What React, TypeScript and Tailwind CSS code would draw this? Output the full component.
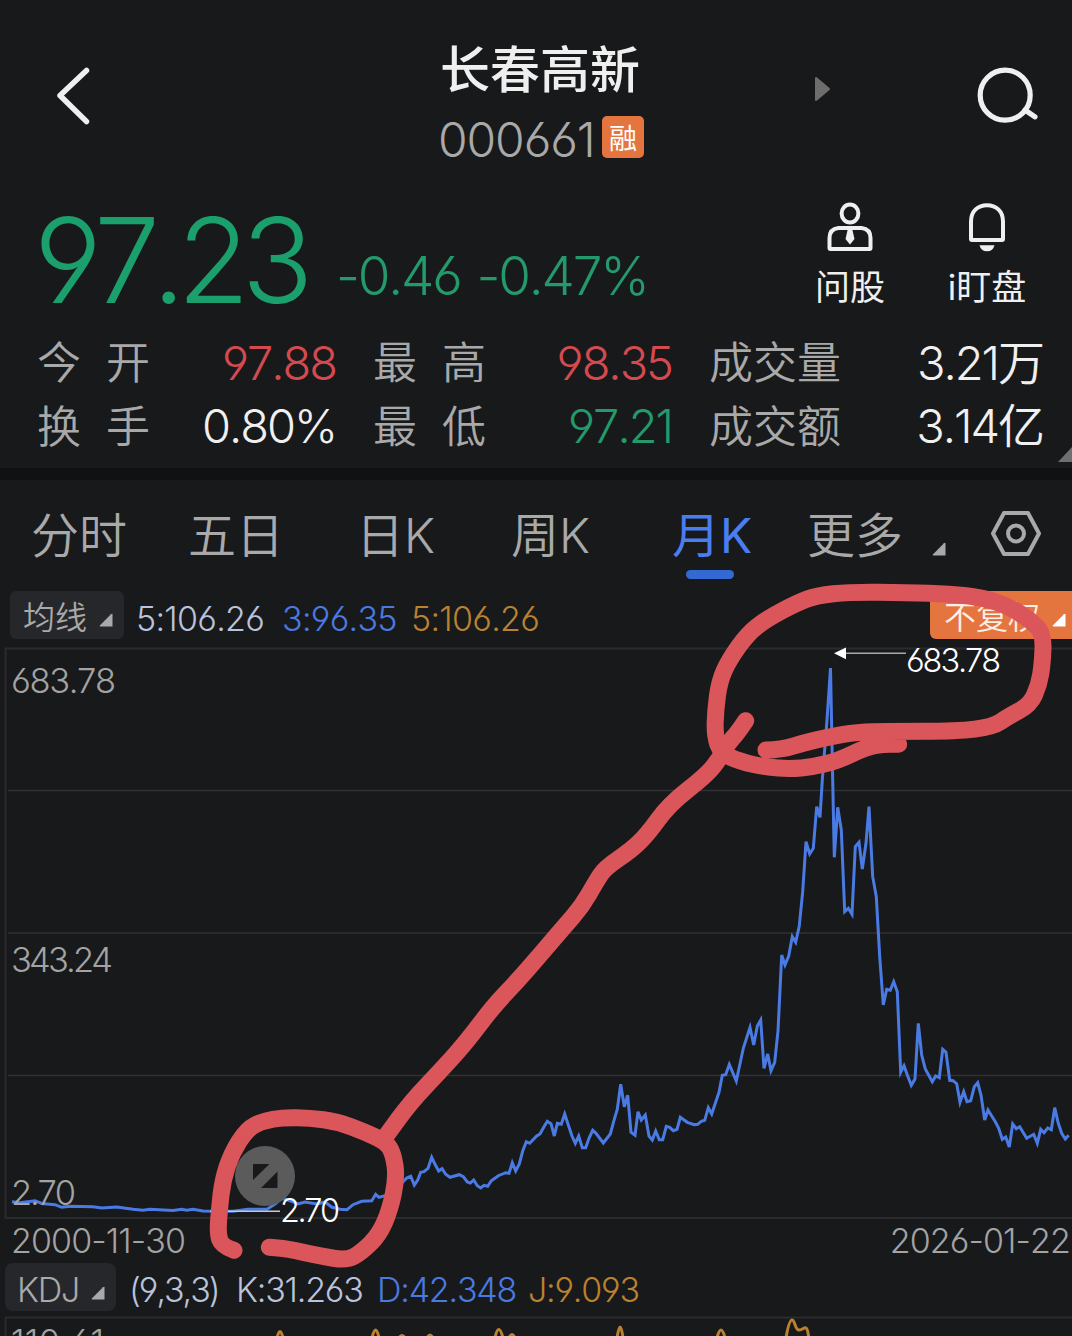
type Point = [number, number]

const quotes = [
  [
    { label: ['今', '开'], value: '97.88', color: 'text-[#d44a4f]' },
    { label: ['最', '高'], value: '98.35', color: 'text-[#d44a4f]' },
    { label: ['成', '交', '量'], value: '3.21万', color: 'text-[#f0f0f0]' },
  ],
  [
    { label: ['换', '手'], value: '0.80%', color: 'text-[#f0f0f0]' },
    { label: ['最', '低'], value: '97.21', color: 'text-[#23996c]' },
    { label: ['成', '交', '额'], value: '3.14亿', color: 'text-[#f0f0f0]' },
  ],
]

const tabs = [
  { name: '分时', width: 'w-[157px]' },
  { name: '五日', width: 'w-[168px]' },
  { name: '日K', width: 'w-[155px]' },
  { name: '周K', width: 'w-[161px]' },
  { name: '月K', width: 'w-[135px]', active: true },
  { name: '更多', width: 'w-[125px]' },
]

const gridLines = [790.5, 933, 1075.5]

// Monthly close, already projected to screen units
const priceLine =
  '12,1201.7 20,1202.7 35,1200.7 41.7,1203.5 55,1204.7 61.7,1207.3 70,1206.3 93,1206.7 101.7,1208 116.7,1207 133,1209.3 143,1210.3 150,1209.3 173,1210.5 181.7,1209.3 186.7,1210.3 193,1209.3 203,1211 213,1211.3 233,1211.3 248,1209.3 267,1209.3 275,1204 281.7,1198.3 290,1200.7 298,1204 305,1202 317,1204 325,1202 332,1207.3 340,1209.3 347,1209.7 353,1204.7 361.7,1201.3 371.7,1200.7 375.7,1194.3 379,1197.3 388,1195 400,1185 ' +
  '406.7,1178 410.7,1176.3 414.3,1185 417.7,1180 420.7,1172.3 424,1171.7 428,1168.3 431.7,1157.3 435,1164.3 438.7,1171 442,1168.7 445.7,1174.3 450,1177.3 459.3,1174.7 463.3,1176.7 467.3,1182 470.3,1183 473.7,1180 477.3,1185.7 480.7,1188 484,1185.3 487.7,1186.3 491.3,1180.7 498.3,1175.7 505.7,1172.7 509,1173.3 512.3,1162.7 515.7,1171 519.3,1164 522.7,1151 526.3,1141.7 529.7,1143.3 536.7,1136 540,1134 543.7,1127.3 547.3,1121.3 551,1123.7 554.3,1136 557.3,1123.3 561.3,1124.3 564.7,1114 568.3,1125 572,1136 575.3,1143.3 578.7,1136 582.3,1147.7 585.7,1147.7 589,1138.3 592.7,1130.3 596,1133.3 603.3,1143 610.3,1134 613.7,1121.3 617.3,1109.3 620.7,1084.3 624.3,1106.7 627.7,1095.3 631,1132.3 635,1135.3 638,1111.7 641.3,1120 645.3,1115 649,1136 652.3,1140 655.7,1131 659.3,1139.7 662.7,1139.7 666.3,1126.3 669.7,1127.3 673.3,1130.7 677,1129.3 680.3,1117.3 687.3,1122.3 694.3,1124.7 697.7,1124.3 701.3,1121.3 704.7,1120.3 708.3,1107.7 711.7,1114 719,1092.3 722.3,1075.3 725.7,1074.7 ' +
  '729.3,1064.5 736.3,1081 743.3,1048.3 750,1027.3 753.7,1045 757.3,1026 760.7,1020 764,1068.3 767.7,1054 771,1070.7 774.7,1062.3 778,1031 781.7,955 785,965 788.7,956 792.3,936.7 795.7,942.3 799.3,925.7 802.7,891.7 806,841.7 809.7,854 813.3,848.3 816.7,806.7 820,817.3 822.3,780 827,720 830.5,668 832.7,780 834.3,857.3 837.7,807.3 841.3,830 844.7,911.7 848.3,908.3 852,914.3 855.3,846.7 859,842.3 862.3,869 866,843.3 869,806.7 872.7,876.7 876.3,896.7 879.7,956.7 883.3,1005 886.7,989.3 890.3,990.3 893.7,981.7 897.3,991.7 900.7,1072.3 904,1065.7 907.7,1076 911.3,1085.3 915,1079 918.3,1023.3 921.7,1055 925.3,1069 932.3,1081.7 935.7,1076 939.3,1077.7 942.7,1049.3 946,1052.3 949.7,1080.3 953,1080.7 956.7,1083.7 960,1102.3 963.7,1091.7 967,1101.7 970.7,1100.7 974.3,1086.7 977.7,1082.7 981,1095 984.7,1120 988,1110 995.3,1121.7 998.7,1128.3 1002.3,1139.3 1005.7,1137 1009.3,1147 1012.7,1124 1016.3,1128.7 1019.7,1126.7 1026.7,1138.3 1033.7,1134.3 1037.3,1143.3 1040.7,1129.3 1044,1132.7 1047.7,1128 1051.3,1129.7 1054.7,1107.7 1058.3,1123.3 1061.7,1133.3 1065.3,1139 1068.7,1135.3'

const strokes: Point[][] = [
  [
    [766, 750], [781.7, 749.7], [803, 743], [830, 736.7], [856.7, 732], [890, 731.3], [956.7, 731.3],
    [993, 727], [1008, 716.7], [1030, 705], [1039, 685], [1042.5, 663], [1043.5, 633], [1030, 620],
    [1010, 607], [983, 597.5], [950, 594], [906.7, 592.5], [850, 592], [816.7, 595.5], [796.7, 603],
    [766.7, 619], [748, 633.3], [729, 660], [719.5, 681], [715.5, 710], [714.8, 736], [721, 753],
    [740, 761.7], [766.7, 767.3], [790, 768.9], [813, 767], [838, 760.7], [866.7, 747], [883, 744.3],
    [898.7, 744.3],
  ],
  [
    [745.7, 720.7], [736.7, 734], [728, 743], [720, 758], [706.7, 775], [669, 804.5], [647, 835],
    [630, 851], [605, 868], [596, 881.7], [581.7, 906.7], [563, 928], [540, 955], [516.7, 981.7],
    [493, 1006.7], [466.7, 1041.7], [443, 1068], [410, 1103], [386.7, 1135],
  ],
  [
    [234, 1250.3], [222, 1246], [217.7, 1234], [219.3, 1210], [222.7, 1180], [231.7, 1153], [247, 1129],
    [263, 1121], [283, 1117.5], [310, 1118], [337, 1121.5], [365, 1132], [386, 1142], [393, 1153],
    [396.8, 1176.7], [390, 1210], [379, 1235], [361.7, 1252], [347, 1260.5], [320, 1256],
    [286.7, 1248.7], [269.3, 1247.3],
  ],
]

// Quadratic curves between midpoints keep the marker strokes soft
function smooth(points: Point[]) {
  const last = points[points.length - 1]
  let d = `M${points[0][0]} ${points[0][1]}`
  for (let i = 1; i < points.length - 1; i++) {
    const [x, y] = points[i]
    const [nx, ny] = points[i + 1]
    d += `Q${x} ${y} ${(x + nx) / 2} ${(y + ny) / 2}`
  }
  return `${d}L${last[0]} ${last[1]}`
}

function Corner({ className }: { className?: string }) {
  return (
    <svg viewBox="0 0 14 14" className={`h-[14px] w-[14px] shrink-0 ${className ?? ''}`}>
      <path d="M13.5 1v12.5H1.2Q0.4 13.3 0.8 12.6L12 1.2Q13 0.4 13.5 1Z" fill="currentColor" />
    </svg>
  )
}

function Header() {
  return (
    <header className="flex h-[190px] shrink-0">
      <svg viewBox="0 0 36 60" className="mt-[66px] ml-[55px] h-[60px] w-[36px]">
        <path d="M31.5 4.5L5 29.5L31.5 55.5" fill="none" stroke="#efefef" strokeWidth="5.5" strokeLinecap="round" strokeLinejoin="round" />
      </svg>
      <div className="ml-[347px] w-[207px] pt-[40px]">
        <h1 className="h-[60px] pl-[2px] text-[50px] leading-[60px] font-medium whitespace-nowrap text-[#efefef]">长春高新</h1>
        <div className="mt-[17px] flex h-[46px] items-center">
          <span className="w-[164px] text-[48px] leading-[46px] tracking-[-1.1px] whitespace-nowrap text-[#a9a9a9]">000661</span>
          <span className="-mt-[6px] flex h-[42px] w-[42px] shrink-0 items-center justify-center rounded-[5px] bg-[#e5753e] pt-[3px] text-[28px] leading-none font-normal text-white">融</span>
        </div>
      </div>
      <svg viewBox="0 0 16 26" className="mt-[76px] ml-[170px] h-[26px] w-[16px]">
        <path d="M0 2Q0.5 0.5 2 1.5L14.5 12Q15.5 13 14.5 14L2 24.5Q0.5 25.5 0 24Z" fill="#6d6d6d" />
      </svg>
      <svg viewBox="0 0 64 60" className="mt-[66px] ml-[145px] h-[60px] w-[64px]">
        <circle cx="29.2" cy="29.2" r="25" fill="none" stroke="#efefef" strokeWidth="5.2" />
        <path d="M49 44L59 50.8" stroke="#efefef" strokeWidth="5.2" strokeLinecap="round" />
      </svg>
    </header>
  )
}

function PriceRow() {
  return (
    <section className="flex h-[141px] shrink-0 text-[#1b9f6c]">
      <div className="w-[300px] pl-[34px] text-[118px] leading-[141px] tracking-[-8px] whitespace-nowrap">97.23</div>
      <div className="flex w-[350px] gap-[16px] pt-[16px] pl-[36px] text-[53px] leading-[141px] tracking-[-2.2px] whitespace-nowrap text-[#23996c]">
        <span>-0.46</span>
        <span>-0.47%</span>
      </div>
      <div className="ml-[150px] flex w-[100px] flex-col items-center font-normal text-[#efefef]">
        <svg viewBox="0 0 46 50" className="mt-[12px] h-[50px] w-[46px]" fill="none" stroke="currentColor" strokeWidth="4">
          <ellipse cx="23" cy="11.5" rx="8.4" ry="9" />
          <path d="M11.5 26H34.5Q43.5 27 43.5 36V46Q43.5 47 42.5 47H3.5Q2.5 47 2.5 46V36Q2.5 27 11.5 26Z" />
          <path d="M20.8 27H25.2L27.5 37L23 42.5L18.5 37Z" fill="currentColor" stroke="none" />
        </svg>
        <span className="mt-[14px] text-[35px] leading-[42px] whitespace-nowrap">问股</span>
      </div>
      <div className="ml-[37px] flex w-[100px] flex-col items-center font-normal text-[#efefef]">
        <svg viewBox="0 0 40 50" className="mt-[12px] h-[50px] w-[40px]" fill="none" stroke="currentColor" strokeWidth="4">
          <path d="M4 37V19.5C4 9 11 3.2 20 3.2S36 9 36 19.5V37Q36 38 35 38H5Q4 38 4 37Z" />
          <path d="M12.5 43.2H27.5Q26 49.3 20 49.3T12.5 43.2Z" fill="currentColor" stroke="none" />
        </svg>
        <span className="mt-[14px] text-[35px] leading-[42px] whitespace-nowrap">i盯盘</span>
      </div>
    </section>
  )
}

function QuoteGrid() {
  return (
    <section className="relative h-[137px] shrink-0">
      {quotes.map((row, i) => (
        <div key={i} className="flex h-[63.5px] items-center gap-[36px] pl-[37px]">
          {row.map((q) => (
            <div key={q.value} className={`flex items-center justify-between ${q.label.length === 3 ? 'w-[335px]' : 'w-[300px]'}`}>
              <span className={`flex pt-px text-[44px] leading-[60px] text-[#a9a9a9] ${q.label.length === 3 ? '' : 'gap-[25px]'}`}>
                {q.label.map((c) => (
                  <span key={c}>{c}</span>
                ))}
              </span>
              <span className={`mr-[1px] text-[47px] leading-[60px] tracking-[-2px] whitespace-nowrap ${q.color}`}>{q.value}</span>
            </div>
          ))}
        </div>
      ))}
      <svg viewBox="0 0 14 15" className="absolute right-0 bottom-[6px] h-[15px] w-[14px]">
        <path d="M14 0V15H0Z" fill="#6f6f6f" />
      </svg>
    </section>
  )
}

function TabBar() {
  return (
    <nav className="flex h-[111px] shrink-0 pl-[31px] text-[48px] leading-[112px] text-[#a9a9a9]">
      {tabs.map((tab) => (
        <div key={tab.name} className={`relative shrink-0 whitespace-nowrap ${tab.width} ${tab.active ? 'font-normal text-[#4a7df0]' : ''}`}>
          {tab.name}
          {tab.active && <i className="absolute top-[90px] left-[14px] h-[9px] w-[48px] rounded-full bg-[#3469d4]" />}
        </div>
      ))}
      <Corner className="mt-[62px]" />
      <svg viewBox="0 0 52 48" className="mt-[30px] ml-[44px] h-[48px] w-[52px]" fill="none" stroke="#a9a9a9" strokeWidth="4" strokeLinejoin="round">
        <path d="M14 3H38L49 23.5L38 44H14L3 23.5Z" />
        <circle cx="26" cy="23.5" r="8" />
      </svg>
    </nav>
  )
}

function AverageRow() {
  return (
    <div className="flex h-[48px] shrink-0 items-center pl-[10px] text-[34px] leading-[48px] tracking-[-0.7px] whitespace-nowrap">
      <div className="flex h-[48px] w-[114px] items-center rounded-[6px] bg-[#26272b] pl-[13px] text-[32px] tracking-normal text-[#a9a9a9]">
        <span className="pt-[5px]">均线</span>
        <Corner className="mt-[10px] ml-[12px]" />
      </div>
      <span className="ml-[12px] w-[146px] pt-[7px] text-[#b9c3dc]">5:106.26</span>
      <span className="w-[129px] pt-[7px] text-[#4a7ae0]">3:96.35</span>
      <span className="pt-[7px] text-[#b9822f]">5:106.26</span>
      <div className="ml-auto flex h-[48px] w-[142px] items-center rounded-l-[6px] bg-[#e5753e] pl-[14px] text-[32px] tracking-normal text-[#fdeee6]">
        <span className="pt-[6px]">不复权</span>
        <Corner className="mt-[10px] ml-[12px] text-white" />
      </div>
    </div>
  )
}

function PriceChart() {
  return (
    <svg viewBox="0 639 1072 583" className="h-[583px] w-[1072px] shrink-0" fill="none">
      <path d="M1072 648.5H5.5V1218H1072" stroke="#2a2b2e" strokeWidth="2" />
      {gridLines.map((y) => (
        <path key={y} d={`M8 ${y}H1072`} stroke="#303134" strokeWidth="1.5" />
      ))}
      <polyline points={priceLine} stroke="#4a7be4" strokeWidth="3" strokeLinejoin="miter" />
      <g fill="#a3a3a3" fontSize="34.5">
        <text x="11" y="693" textLength="105">683.78</text>
        <text x="11" y="972" textLength="102">343.24</text>
        <text x="11" y="1205" textLength="65">2.70</text>
      </g>
      <path d="M210 1211.3H280" stroke="#c4cbd8" strokeWidth="1.5" />
      <path d="M845 653.3H906" stroke="#a8a8a8" strokeWidth="1.5" />
      <path d="M834 653.3L846 647.5V659.2Z" fill="#fff" />
      <circle cx="265" cy="1176" r="30" fill="#5b5b5b" />
      <path d="M254 1164H269.5L253 1180V1165Q253 1164 254 1164ZM277.5 1171.5V1187Q277.5 1188 276.5 1188H261Z" fill="#18191b" />
      <g fill="#fff" fontSize="32.5">
        <text x="906" y="671.5" textLength="95">683.78</text>
        <text x="280" y="1221.5" textLength="60">2.70</text>
      </g>
    </svg>
  )
}

function KdjRow() {
  return (
    <div className="mt-[3px] flex h-[48px] shrink-0 items-center pl-[5px] text-[34px] leading-[54px] tracking-[-1.2px] whitespace-nowrap">
      <div className="flex h-[48px] w-[111px] items-center rounded-[8px] bg-[#26272b] pl-[12px] text-[#a9a9a9]">
        <span className="w-[74px] pt-[6px]">KDJ</span>
        <Corner className="mt-[12px]" />
      </div>
      <span className="ml-[13px] w-[107px] pt-[6px] tracking-[-2px] text-[#b9c3dc]">(9,3,3)</span>
      <span className="w-[141px] pt-[6px] text-[#b9c3dc]">K:31.263</span>
      <span className="w-[151px] pt-[6px] text-[#4a7ae0]">D:42.348</span>
      <span className="pt-[6px] text-[#b9822f]">J:9.093</span>
    </div>
  )
}

function KdjChart() {
  return (
    <svg viewBox="0 1311 1072 25" className="h-[25px] w-[1072px] shrink-0" fill="none">
      <path d="M1072 1317.5H5.5V1340" stroke="#2a2b2e" strokeWidth="2" />
      <text x="11" y="1354" fill="#a3a3a3" fontSize="34.5" textLength="93">110.61</text>
      <path
        d="M277 1338Q280 1325 283 1338M372 1338Q375.7 1322 379 1338M399 1338Q402 1333 405 1338M427 1338Q430 1332 433 1338M495 1338Q498.5 1321 503 1338M509 1338Q512 1331 515 1338M617 1338Q620.3 1316 623 1338M717 1338Q721 1322 725 1338M786 1338C788 1326 790 1320 792 1320C795 1320 795 1330 799 1330C803 1330 804 1327 806 1328C808 1329 808 1334 809 1338"
        stroke="#b9822f"
        strokeWidth="3"
      />
    </svg>
  )
}

export default function App() {
  return (
    <main
      className="relative flex h-[1336px] w-[1072px] flex-col overflow-hidden bg-[#18191b] font-['Inter','Noto_Sans_CJK_SC',sans-serif] font-[350] [font-kerning:none] [font-feature-settings:'cv03','cv04']"
    >
      <Header />
      <PriceRow />
      <QuoteGrid />
      <div className="h-[12px] shrink-0 bg-[#101113]" />
      <TabBar />
      <AverageRow />
      <PriceChart />
      <div className="flex h-[38px] shrink-0 justify-between pr-[2px] pl-[11px] text-[34px] leading-[38px] tracking-[-0.9px] text-[#a3a3a3]">
        <span>2000-11-30</span>
        <span>2026-01-22</span>
      </div>
      <KdjRow />
      <KdjChart />

      {/* Hand-drawn marks */}
      <svg viewBox="0 0 1072 1336" className="pointer-events-none absolute inset-0 h-[1336px] w-[1072px]" fill="none" stroke="#db565a" strokeWidth="17" strokeLinecap="round" strokeLinejoin="round">
        {strokes.map((s, i) => (
          <path key={i} d={smooth(s)} />
        ))}
      </svg>
    </main>
  )
}
